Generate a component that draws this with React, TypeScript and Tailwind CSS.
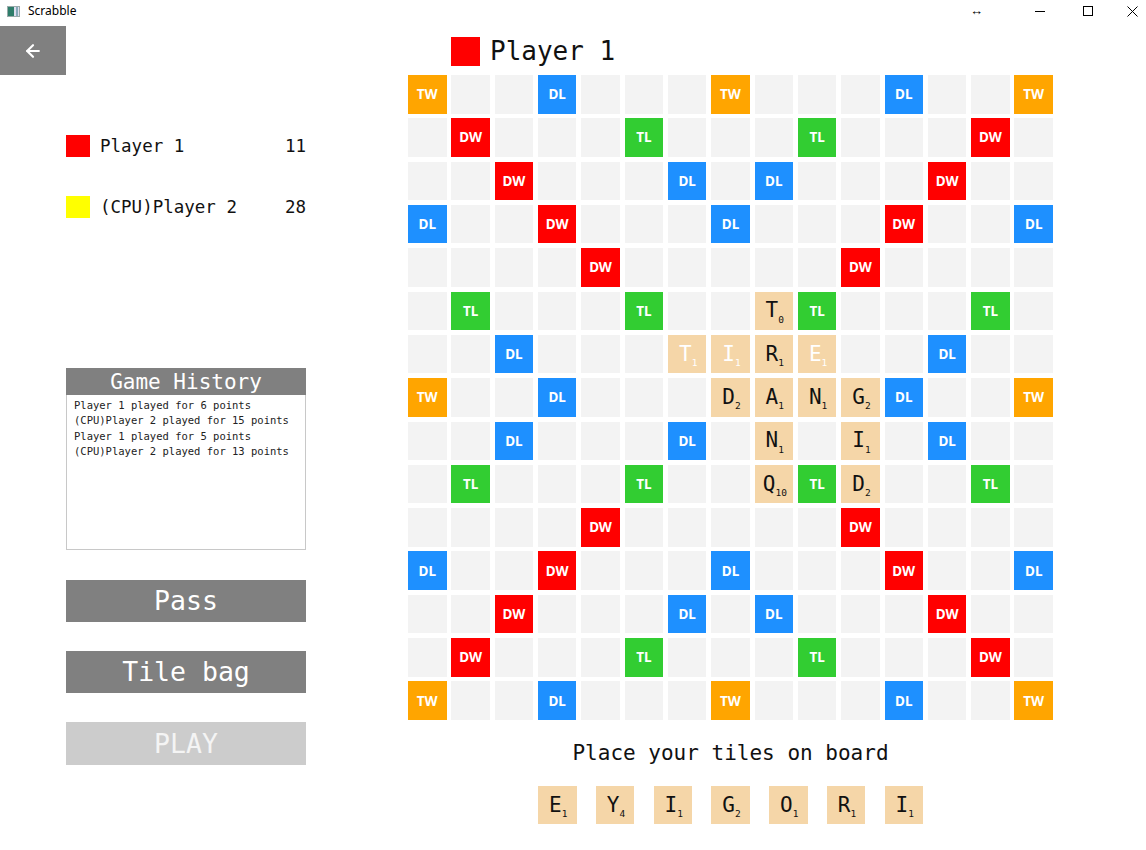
import { ArrowLeft } from "lucide-react";

type Bonus = "TW" | "DW" | "TL" | "DL" | "";
type Tile = { l: string; v: number; faded?: boolean };

const mono = "font-['DejaVu_Sans_Mono','Liberation_Mono',monospace]";

const bonusRows: string[] = [
  "T..l...T...l..T",
  ".D...t...t...D.",
  "..D...l.l...D..",
  "l..D...l...D..l",
  "....D.....D....",
  ".t...t...t...t.",
  "..l...l.l...l..",
  "T..l.......l..T",
  "..l...l.l...l..",
  ".t...t...t...t.",
  "....D.....D....",
  "l..D...l...D..l",
  "..D...l.l...D..",
  ".D...t...t...D.",
  "T..l...T...l..T",
];

const codeMap: Record<string, Bonus> = { T: "TW", D: "DW", t: "TL", l: "DL", ".": "" };

const bonusColor: Record<Bonus, string> = {
  TW: "bg-[#ffa500]",
  DW: "bg-[#ff0000]",
  TL: "bg-[#32cd32]",
  DL: "bg-[#1e90ff]",
  "": "bg-[#f3f3f3]",
};

const placed: Record<string, Tile> = {
  "5,8": { l: "T", v: 0 },
  "6,6": { l: "T", v: 1, faded: true },
  "6,7": { l: "I", v: 1, faded: true },
  "6,8": { l: "R", v: 1 },
  "6,9": { l: "E", v: 1, faded: true },
  "7,7": { l: "D", v: 2 },
  "7,8": { l: "A", v: 1 },
  "7,9": { l: "N", v: 1 },
  "7,10": { l: "G", v: 2 },
  "8,8": { l: "N", v: 1 },
  "8,10": { l: "I", v: 1 },
  "9,8": { l: "Q", v: 10 },
  "9,10": { l: "D", v: 2 },
};

const rack: Tile[] = [
  { l: "E", v: 1 },
  { l: "Y", v: 4 },
  { l: "I", v: 1 },
  { l: "G", v: 2 },
  { l: "O", v: 1 },
  { l: "R", v: 1 },
  { l: "I", v: 1 },
];

const history = [
  "Player 1 played for 6 points",
  "(CPU)Player 2 played for 15 points",
  "Player 1 played for 5 points",
  "(CPU)Player 2 played for 13 points",
];

function LetterTile({ t }: { t: Tile }) {
  const color = t.faded ? "text-white" : "text-[#111]";
  return (
    <div className={`flex h-[38.5px] w-[38.5px] items-center justify-center bg-[#f5d6a8] ${mono} ${color}`}>
      <span className="ml-[2px] text-[21px] leading-none">{t.l}</span>
      <span className="mt-[17px] text-[9.5px] leading-none">{t.v}</span>
    </div>
  );
}

function Cell({ r, c }: { r: number; c: number }) {
  const tile = placed[`${r},${c}`];
  if (tile) return <LetterTile t={tile} />;
  const b = codeMap[bonusRows[r][c]];
  return (
    <div
      className={`flex h-[38.5px] w-[38.5px] items-center justify-center font-['Noto_Sans','Liberation_Sans',sans-serif] text-[13.5px] font-bold text-white ${bonusColor[b]}`}
    >
      {b}
    </div>
  );
}

function TitleBar() {
  return (
    <div className="flex h-[22px] items-center font-['Noto_Sans','Liberation_Sans',sans-serif] text-[12px] text-black">
      <div className="ml-[7px] mr-[8px] flex h-[11px] w-[13px] border border-[#9aa] bg-[#dde]">
        <div className="w-[6px] bg-[#2e7d6a]" />
        <div className="w-[2px]" />
        <div className="w-[2px] bg-[#8ab]" />
      </div>
      <span>Scrabble</span>
      <div className="ml-auto flex items-center">
        <span className="mr-[52px] text-[13px] font-bold">↔</span>
        <div className="mr-[38px] h-px w-[10px] bg-black" />
        <div className="mr-[34px] h-[10px] w-[10px] border border-black" />
        <svg width="11" height="11" viewBox="0 0 11 11" className="mr-[8px]">
          <path d="M0.5 0.5 L10.5 10.5 M10.5 0.5 L0.5 10.5" stroke="#000" strokeWidth="1" />
        </svg>
      </div>
    </div>
  );
}

function GrayButton({ label, disabled }: { label: string; disabled?: boolean }) {
  return (
    <div
      className={`flex w-[240px] items-center justify-center text-[26.5px] ${mono} ${
        disabled ? "h-[43px] bg-[#cccccc] text-[#f4f4f4]" : "h-[42px] bg-[#808080] text-white"
      }`}
    >
      {label}
    </div>
  );
}

export default function App() {
  return (
    <div className="h-[850px] w-[1146px] overflow-hidden bg-white">
      <TitleBar />
      <div className="flex">
        {/* left panel */}
        <div className="w-[408px] shrink-0">
          <div className="mt-[4px] flex h-[49px] w-[66px] items-center justify-center bg-[#808080]">
            <ArrowLeft size={20} strokeWidth={2.6} color="white" />
          </div>
          <div className="ml-[66px] w-[240px]">
            <div className={`mt-[60px] flex h-[22px] items-center text-[17.5px] text-[#111] ${mono}`}>
              <div className="mr-[10px] h-[22px] w-[24px] bg-[#ff0000]" />
              <span>Player 1</span>
              <span className="ml-auto">11</span>
            </div>
            <div className={`mt-[39px] flex h-[22px] items-center text-[17.5px] text-[#111] ${mono}`}>
              <div className="mr-[10px] h-[22px] w-[24px] bg-[#ffff00]" />
              <span>(CPU)Player 2</span>
              <span className="ml-auto">28</span>
            </div>
            <div className={`mt-[150px] flex h-[27px] items-center justify-center bg-[#808080] pt-[2px] text-[21px] text-white ${mono}`}>
              Game History
            </div>
            <div className={`h-[155px] border border-t-0 border-[#c8c8c8] px-[7px] pt-[3px] text-[10.5px] leading-[15.3px] text-[#222] ${mono}`}>
              {history.map((h, i) => (
                <div key={i}>{h}</div>
              ))}
            </div>
            <div className="mt-[30px] flex flex-col gap-[29px]">
              <GrayButton label="Pass" />
              <GrayButton label="Tile bag" />
              <GrayButton label="PLAY" disabled />
            </div>
          </div>
        </div>

        {/* board panel */}
        <div className="flex w-[645px] flex-col">
          <div className="ml-[43px] mt-[15px] flex h-[29px] items-center">
            <div className="mr-[10px] h-[29px] w-[29px] bg-[#ff0000]" />
            <span className={`text-[26px] text-[#111] ${mono}`}>Player 1</span>
          </div>
          <div className="mt-[9px] grid w-[645px] grid-cols-15 gap-x-[4.82px] gap-y-[4.82px]">
            {bonusRows.map((row, r) =>
              row.split("").map((_, c) => <Cell key={`${r}-${c}`} r={r} c={c} />)
            )}
          </div>
          <div className={`mt-[21px] text-center text-[21px] leading-[25px] text-[#111] ${mono}`}>
            Place your tiles on board
          </div>
          <div className="mt-[20px] flex justify-center gap-[19.25px]">
            {rack.map((t, i) => (
              <LetterTile key={i} t={t} />
            ))}
          </div>
        </div>
      </div>
    </div>
  );
}
